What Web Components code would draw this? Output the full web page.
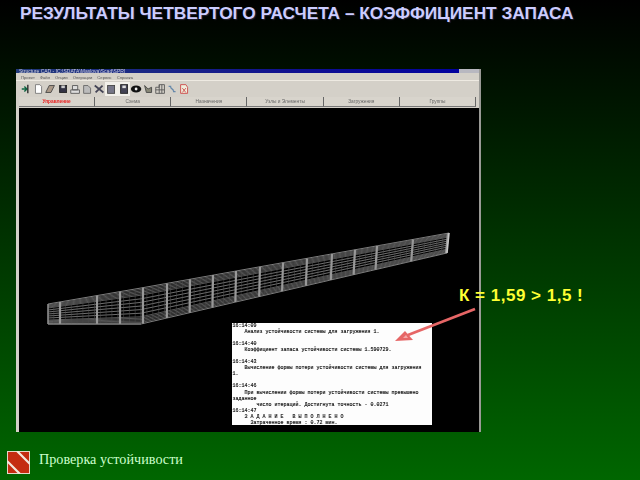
<!DOCTYPE html>
<html lang="ru">
<head>
<meta charset="utf-8">
<title>Проверка устойчивости</title>
<style>
  html, body { margin: 0; padding: 0; background: #000; }
</style>
</head>
<body>
<slide-page>
  <span slot="title">РЕЗУЛЬТАТЫ ЧЕТВЕРТОГО РАСЧЕТА – КОЭФФИЦИЕНТ ЗАПАСА</span>
  <app-window slot="body">
    <beam-model></beam-model>
    <log-panel></log-panel>
  </app-window>
  <result-note slot="body"></result-note>
  <span slot="footer">Проверка устойчивости</span>
</slide-page>

<script>
class SlidePage extends HTMLElement {
  connectedCallback() {
    this.attachShadow({ mode: 'open' });
    this.shadowRoot.innerHTML = `
      <style>
        :host {
          display: flex;
          flex-direction: column;
          width: 640px;
          height: 480px;
          overflow: hidden;
          background: linear-gradient(to bottom, #000 0%, #006600 100%);
        }
        h1 {
          margin: 0;
          height: 69px;
          box-sizing: border-box;
          padding: 3px 0 0 20px;
          font: bold 17.3px/20px "Liberation Sans", Arial, sans-serif;
          color: #ccccff;
          text-shadow: 1px 1px 1px #223;
          white-space: nowrap;
        }
        .body {
          position: relative;
          height: 363px;
          padding-left: 16px;
        }
        footer {
          display: flex;
          align-items: flex-start;
          gap: 9px;
          padding: 19px 0 0 7px;
          font: 14.2px/16px "Liberation Serif", "Times New Roman", serif;
          color: #ccffcc;
        }
        svg { display: block; }
      </style>
      <h1><slot name="title"></slot></h1>
      <div class="body"><slot name="body"></slot></div>
      <footer>
        <svg width="23" height="23" viewBox="0 0 23 23">
          <rect width="23" height="23" fill="#e4d8c8"/>
          <rect x="1" y="1" width="21" height="21" fill="#c42c10"/>
          <path d="M10 0 L23 13 M0 10 L13 23" stroke="#f2e8dc" stroke-width="2.2" fill="none"/>
        </svg>
        <slot name="footer"></slot>
      </footer>
    `;
  }
}

class AppWindow extends HTMLElement {
  connectedCallback() {
    const tabs = ['Управление', 'Схема', 'Назначения', 'Узлы и Элементы', 'Загружения', 'Группы'];
    const menu = ['Проект', 'Файл', 'Опции', 'Операции', 'Сервис', 'Справка'];
    // toolbar glyphs, roughly what the blurred buttons look like
    const tools = [
      '<path d="M2 7h6M5 4l3 3-3 3" stroke="#164" stroke-width="1.6" fill="none"/><path d="M9 2v10" stroke="#222" stroke-width="1.5"/>',
      '<path d="M4 2h5l2 2v8H4z" fill="#fff" stroke="#777"/>',
      '<path d="M2 11l4-8h6l-4 8z" fill="#a98" stroke="#444"/>',
      '<rect x="3" y="3" width="8" height="8" fill="#334" stroke="#222"/><rect x="5" y="3" width="4" height="3" fill="#ccc"/>',
      '<path d="M2 8h10v4H2zM4 3h6v5H4z" fill="#ddd" stroke="#555"/>',
      '<path d="M3 3h5l3 3v6H3z" fill="#bbb" stroke="#666"/>',
      '<path d="M2 3l10 8M3 11l8-8" stroke="#445" stroke-width="2"/>',
      '<rect x="3" y="3" width="8" height="9" fill="#778" stroke="#444"/>',
      '<rect x="3" y="2" width="8" height="10" fill="#445" stroke="#222"/><rect x="5" y="3" width="4" height="3" fill="#ddd"/>',
      '<ellipse cx="7" cy="7" rx="6" ry="4" fill="#111"/><circle cx="7" cy="7" r="1.6" fill="#eee"/>',
      '<path d="M3 3l4 4 4-2v6H5z" fill="#887" stroke="#444"/>',
      '<path d="M2 12V5h4V2h6v10zM2 8h10M6 2v10M9 2v10" fill="none" stroke="#555"/>',
      '<path d="M3 4h3M8 10h3M5 5l4 4" stroke="#68a" stroke-width="1.5"/>',
      '<path d="M3 2h6l2 3v7H3z" fill="#eed" stroke="#c44"/><path d="M5 6l4 5M9 6l-4 5" stroke="#c44"/>'
    ];
    this.attachShadow({ mode: 'open' });
    this.shadowRoot.innerHTML = `
      <style>
        :host {
          display: flex;
          flex-direction: column;
          width: 465px;
          height: 363px;
          box-sizing: border-box;
          background: #d4d0c8;
          border-right: 2px solid #9a9a96;
          font-family: "Liberation Sans", Arial, sans-serif;
        }
        .title {
          height: 4px;
          overflow: hidden;
          background: linear-gradient(to right, #223a7a, #101090 60%, #0000a0);
          color: #ccd;
          font-size: 5px;
          line-height: 4px;
          padding-left: 3px;
          display: flex;
          justify-content: space-between;
          filter: blur(.4px);
        }
        .title b { display: block; width: 20px; background: #b8b8c0; }
        .menu {
          height: 7px;
          display: flex;
          gap: 5px;
          padding: 1px 0 0 5px;
          font-size: 4.2px;
          line-height: 7px;
          color: #555;
          filter: blur(.45px);
        }
        .tools {
          height: 15px;
          display: flex;
          align-items: center;
          padding-left: 4px;
          border-top: 1px solid #eeeae2;
          filter: blur(.6px);
          margin-top: -1px;
        }
        .tools svg { width: 12.2px; height: 14px; display: block; }
        .tools svg:nth-child(8), .tools svg:nth-child(9) { background: #f2f0ea; }
        .tabs {
          display: grid;
          grid-template-columns: repeat(6, 1fr);
          height: 10px;
          margin: 1px 3px 1px 3px;
          filter: blur(.45px);
        }
        .tabs div {
          border-right: 1px solid #666;
          border-bottom: 1px solid #777;
          text-align: center;
          font-size: 4.8px;
          line-height: 9px;
          color: #666;
          background: #d8d4cc;
        }
        .tabs div:first-child { color: #e82020; font-weight: bold; }
        .canvas {
          position: relative;
          flex: 1;
          margin-left: 3px;
          background: #000;
        }
      </style>
      <div class="title"><span>Structure CAD - [C:\\SDATA\\Maslova\\Scad\\SPR]</span><b></b></div>
      <div class="menu">${menu.map(m => `<span>${m}</span>`).join('')}</div>
      <div class="tools">${tools.map(t => `<svg viewBox="0 0 14 14">${t}</svg>`).join('')}</div>
      <div class="tabs">${tabs.map(t => `<div>${t}</div>`).join('')}</div>
      <div class="canvas"><slot></slot></div>
    `;
  }
}

class BeamModel extends HTMLElement {
  connectedCallback() {
    // coordinates are relative to the black canvas (x-19, y-107)
    const ox = 19, oy = 107;
    const P = (x, y) => [x - ox, y - oy];
    const lerp = (a, b, t) => [a[0] + (b[0] - a[0]) * t, a[1] + (b[1] - a[1]) * t];
    const A = P(48, 303), B = P(48, 323), C = P(141, 287), D = P(141, 323), E = P(449, 232), F = P(447, 252);
    let lines = '';
    const ln = (p, q, c, w) => {
      lines += `<line x1="${p[0].toFixed(1)}" y1="${p[1].toFixed(1)}" x2="${q[0].toFixed(1)}" y2="${q[1].toFixed(1)}" stroke="${c}" stroke-width="${w}"/>`;
    };
    // long lines of the beam, dense near the flanges, open in the web
    [0, .04, .08, .12, .16, .2, .3, .4, .5, .6, .7, .8, .84, .88, .92, .96, 1].forEach(t => {
      const c = (t === 0 || t === 1) ? '#a0a0a0' : (t > .25 && t < .75 ? '#8c8c8c' : '#6c6c6c');
      ln(lerp(C, D, t), lerp(E, F, t), c, .8);
      ln(lerp(A, B, t), lerp(C, D, t), c, .8);
    });
    // cross sections, thin ones
    for (let i = 0; i <= 52; i++) {
      const s = i / 52;
      ln(lerp(C, E, s), lerp(D, F, s), '#4c4c4c', .6);
    }
    for (let i = 0; i <= 16; i++) {
      const s = i / 16;
      ln(lerp(A, C, s), lerp(B, D, s), '#4c4c4c', .6);
    }
    // heavy ribs
    [60, 97, 120, 143, 167, 190, 213, 236, 260, 283, 307, 332, 355, 377, 413, 448].forEach(x => {
      const X = x - ox;
      if (X < C[0]) {
        const s = (X - A[0]) / (C[0] - A[0]);
        ln(lerp(A, C, s), lerp(B, D, s), '#989898', 2.2);
      } else {
        const s = (X - C[0]) / (E[0] - C[0]);
        ln(lerp(C, E, s), lerp(D, F, s), '#989898', 2.2);
      }
    });
    ln(A, B, '#999', 1.4);
    ln(E, F, '#c8c8c8', 1.6);
    ln(B, D, '#888', 1);
    this.attachShadow({ mode: 'open' });
    this.shadowRoot.innerHTML = `
      <style>
        :host { position: absolute; left: 0; top: 0; width: 460px; height: 324px; display: block; }
        svg { display: block; filter: blur(.6px); }
      </style>
      <svg width="460" height="324" viewBox="0 0 460 324">${lines}</svg>
    `;
  }
}

class LogPanel extends HTMLElement {
  connectedCallback() {
    const text = [
      '16:14:09',
      '    Анализ устойчивости системы для загружения 1.',
      '',
      '16:14:40',
      '    Коэффициент запаса устойчивости системы 1.590729.',
      '',
      '16:14:43',
      '    Вычисление формы потери устойчивости системы для загружения',
      '1.',
      '',
      '16:14:46',
      '    При вычислении формы потери устойчивости системы превышено',
      'заданное',
      '        число итераций. Достигнута точность - 0.0271',
      '16:14:47',
      '    З А Д А Н И Е   В Ы П О Л Н Е Н О',
      '      Затраченное время : 0.72 мин.'
    ].join('\n');
    this.attachShadow({ mode: 'open' });
    this.shadowRoot.innerHTML = `
      <style>
        :host {
          position: absolute;
          left: 213px;
          top: 215px;
          width: 200px;
          height: 102px;
          display: block;
          background: #fdfdfd;
          overflow: hidden;
        }
        pre {
          margin: 0;
          padding: 0 0 0 .5px;
          font: 5px/6.05px "Liberation Mono", "Courier New", monospace;
          color: #111;
          -webkit-text-stroke: .15px #111;
          filter: blur(.4px);
        }
      </style>
      <pre></pre>
    `;
    this.shadowRoot.querySelector('pre').textContent = text;
  }
}

class ResultNote extends HTMLElement {
  connectedCallback() {
    this.attachShadow({ mode: 'open' });
    this.shadowRoot.innerHTML = `
      <style>
        :host {
          position: absolute;
          left: 0;
          top: 0;
          width: 640px;
          height: 363px;
          display: block;
          pointer-events: none;
        }
        span {
          position: absolute;
          left: 459px;
          top: 217px;
          font: bold 17px/20px "Liberation Sans", Arial, sans-serif;
          letter-spacing: .5px;
          color: #ffff33;
          white-space: nowrap;
        }
        svg { position: absolute; left: 0; top: 0; filter: blur(.4px); }
      </style>
      <svg width="640" height="363" viewBox="0 69 640 363">
        <path d="M475 309 L408 335" stroke="#e66666" stroke-width="2.8" fill="none"/>
        <path d="M395 341 L405 331 L413 340 Z" fill="#e66666"/>
        <path d="M403 338 L406 335 L408 338 Z" fill="#f4a8a8"/>
      </svg>
      <span>К = 1,59 &gt; 1,5 !</span>
    `;
  }
}

customElements.define('slide-page', SlidePage);
customElements.define('app-window', AppWindow);
customElements.define('beam-model', BeamModel);
customElements.define('log-panel', LogPanel);
customElements.define('result-note', ResultNote);
</script>
</body>
</html>
